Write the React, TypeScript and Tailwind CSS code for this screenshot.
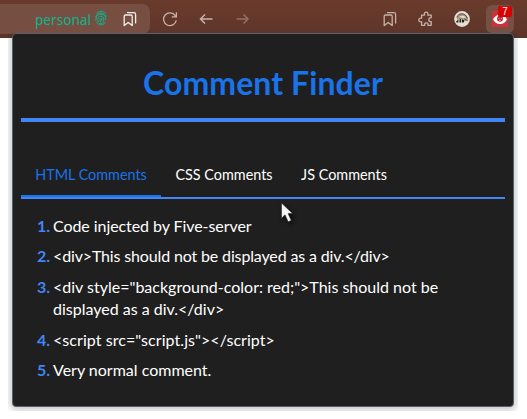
import React from "react";

const comments = [
  { text: "Code injected by Five-server", tracking: "tracking-[-0.07px]" },
  { text: "<div>This should not be displayed as a div.</div>", tracking: "tracking-[-0.145px]" },
  { text: '<div style="background-color: red;">This should not be displayed as a div.</div>', tracking: "" },
  { text: '<script src="script.js"></script>', tracking: "tracking-[0.06px]" },
  { text: "Very normal comment.", tracking: "" },
];

function Bookmarks({ className }: { className: string }) {
  return (
    <svg className={className} viewBox="0 0 14 16" fill="none" stroke="currentColor" strokeWidth="1.3" strokeLinejoin="round">
      <path d="M1.2 14.5V5.2Q1.2 4 2.4 4H8Q9.2 4 9.2 5.2V14.5L5.2 11.4Z" />
      <path d="M4 1.6H10.8Q12.6 1.6 12.6 3.4V12.4" />
    </svg>
  );
}

function Fingerprint() {
  return (
    <svg className="ml-[5px] h-4 w-3 shrink-0 -translate-y-px" viewBox="0 0 12 16" fill="none" stroke="#0bb68d" strokeWidth="1" strokeLinecap="round">
      <path d="M1.6 3.2C3.6.8 8.4.8 10.4 3.2M.8 6.6C2.2 1.8 9.8 1.8 11.2 6.6M1 10.4C.8 5 3 4.2 6 4.2S11 6.2 10.6 9.6M3.2 11.6C2.2 8 3.2 6.2 6 6.2S9.3 9 8.6 11M5.6 11.8C4.6 9.6 5 8.2 6 8.2S7.3 9.6 6.8 10.6M1.6 12.2C3.4 15.8 8.6 15.8 10.4 12.2M4 13.2C5.6 14.2 7.6 13.6 8.6 12.4" />
    </svg>
  );
}

function Toolbar() {
  return (
    <div className="flex h-[38px] items-start bg-linear-to-b from-[#6a3b2c] to-[#5c3529] text-[#c7b2aa]">
      <div className="flex h-[30px] w-[150px] items-center rounded-r-[8px] mt-1 bg-[#764f42]">
        <span className="ml-[35px] w-[55px] shrink-0 pt-[2px] font-['Noto_Sans',sans-serif] text-[13.6px] leading-none text-[#0bb68d]">personal</span>
        <Fingerprint />
        <Bookmarks className="ml-[16px] h-4 w-[14px] text-[#f4ece9]" />
      </div>
      <svg className="mt-[11px] ml-[12px] h-4 w-4" viewBox="0 0 16 16" fill="none" stroke="currentColor" strokeWidth="1.3">
        <path d="M14.3 9.4A6.4 6.4 0 1 1 13.3 4.6L14 5.6M14.4 1.2V5.8H9.8" />
      </svg>
      <svg className="mt-[12px] ml-[21px] h-[14px] w-[14px]" viewBox="0 0 14 14" fill="none" stroke="currentColor" strokeWidth="1.5">
        <path d="M13.5 7H1.5M6 2.5L1.5 7L6 11.5" />
      </svg>
      <svg className="mt-[12px] ml-[23px] h-[14px] w-[14px] text-[#936f63]" viewBox="0 0 14 14" fill="none" stroke="currentColor" strokeWidth="1.5">
        <path d="M.5 7H12M7.5 2.5L12 7L7.5 11.5" />
      </svg>
      <Bookmarks className="mt-[11px] ml-[133px] h-4 w-[14px]" />
      <svg className="mt-[11px] ml-[21px] h-4 w-4" viewBox="0 0 16 16" fill="none" stroke="currentColor" strokeWidth="1.3" strokeLinejoin="round">
        <path d="M3.6 4.1H6.6C6 2.3 6.7 1.2 8.2 1.2S10.4 2.3 9.8 4.1H13.2V6.7C11.5 6.5 10.8 7.5 10.8 8.8S11.6 10.9 13.2 10.6V14.3H10C10.4 12.5 9.5 11.8 8.3 11.8S6.3 12.5 6.7 14.3H3.6V10.7C1.8 11.1.8 10.2.8 8.9S1.8 6.9 3.6 7.2Z" />
      </svg>
      <svg className="mt-[11px] ml-[20px] h-4 w-4" viewBox="0 0 16 16">
        <circle cx="8" cy="8" r="7.9" fill="#e4ddd2" />
        <path d="M3 7C3.2 4 5.5 2.5 8.5 2.7c3.2.2 5.2 2.5 5.5 5.6l-2 2-3-2.4-6 .5Z" fill="#a3977e" />
        <path d="M5.2 5.8C6.8 4.3 10 4.6 11.8 6.2L9.3 7.2Z" fill="#e5dbc4" />
        <path d="M2.3 10.6 4.4 8.2v3.4H2.3ZM5.5 8.5l1.7-.7v3.8H5.5ZM8 8l2.6 1.6-.9 1.8H8Z" fill="#211f1d" />
        <path d="M2.8 6.5C4 1.2 11.8 1.6 13.3 7.3M10.5 8.2l3.2 1.5" fill="none" stroke="#4b453b" strokeWidth=".9" />
      </svg>
      <div className="relative mt-[5px] ml-[16px] h-[28px] w-[28px] rounded-[6px] bg-[#784f43]">
        <svg className="absolute top-[6px] left-[6px] h-4 w-4" viewBox="0 0 16 16">
          <path d="M0 0H16V16H0Z" fill="#c9343a" />
          <path d="M1 8.2Q4 3.4 8 3.4Q12 3.4 15 8.2Q13 13 8 13Q3 13 1 8.2Z" fill="#fff" />
          <circle cx="8" cy="7.8" r="3" fill="#bd2630" />
          <path d="M6.2 7h1.4v1H6.2ZM8.6 7H10v1H8.6ZM7 9h2v1H7Z" fill="#df8b8d" />
        </svg>
        <span className="absolute top-[1px] left-[12px] h-[11px] w-[14px] rounded-[2px] bg-[#d90000] text-center font-['Liberation_Sans',sans-serif] text-[10px] leading-[11px] text-white">7</span>
      </div>
    </div>
  );
}

export default function App() {
  return (
    <div className="relative h-[419px] w-[527px] overflow-hidden bg-white font-[Lato,sans-serif]">
      <Toolbar />
      <div className="relative -mt-[5px] ml-[8px] h-[378px] w-[510px] overflow-hidden pl-[4px]">
        <main className="h-[374px] w-[502px] rounded-[4px] border border-[#59616e] bg-[#1f1f1f] px-[8px] shadow-[0_1px_7px_2px_rgba(0,0,0,0.22)]">
          <h1 className="h-[88px] border-b-4 border-[#4285f4] pt-[27px] text-center text-[32px] leading-[43px] font-bold tracking-[0.08px] text-[#1a73e8]">Comment Finder</h1>
          <nav className="mt-[29px] flex h-[48px] border-b-2 border-[#4285f4] text-[14.4px] leading-[22px] text-white">
            <button className="w-[140px] shrink-0 border-b-2 border-[#1a73e8] pt-[4px] text-[#1a73e8]">HTML Comments</button>
            <button className="w-[126px] shrink-0 border-b-2 border-transparent pt-[4px]">CSS Comments</button>
            <button className="w-[114px] shrink-0 border-b-2 border-transparent pt-[4px]">JS Comments</button>
          </nav>
          <ol className="mt-[16px] ml-[16px] flex w-[420px] flex-col gap-[8px] text-[16px] leading-[22.4px] text-white">
            {comments.map((comment, i) => (
              <li key={comment.text} className="flex">
                <span className="w-[16px] shrink-0 font-bold text-[#4285f4]">{i + 1}.</span>
                <span className={comment.tracking}>{comment.text}</span>
              </li>
            ))}
          </ol>
        </main>
      </div>
      <svg className="absolute top-[200px] left-[278px] h-[28px] w-[20px] drop-shadow-[2px_2px_2px_rgba(0,0,0,0.7)]" viewBox="0 0 20 28">
        <path d="M3.5 3V18.2L7 14.8L10.1 21.8L13.3 20.4L10.1 13.6H14.6Z" fill="#f4f4f4" stroke="#292929" strokeWidth=".6" />
      </svg>
    </div>
  );
}
